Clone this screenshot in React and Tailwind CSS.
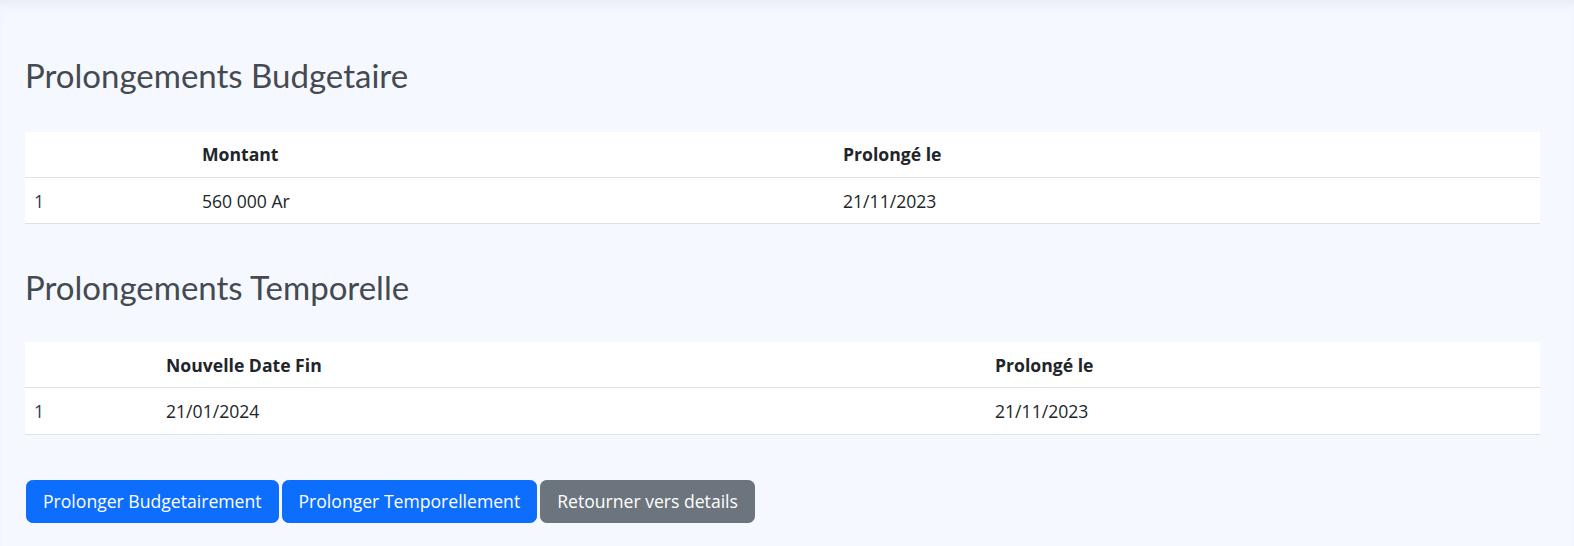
import React from 'react';

const prolongementsBudget = [
  { id: 1, montant: '560 000 Ar', date: '21/11/2023' },
];

const prolongementsTemps = [
  { id: 1, dateFin: '21/01/2024', date: '21/11/2023' },
];

function Titre({ children, className }) {
  return (
    <h2
      className={`text-[33px] leading-[1.2] text-[#444a50] ${className}`}
      style={{ fontFamily: 'Lato, "Noto Sans", sans-serif' }}
    >
      {children}
    </h2>
  );
}

const cell = 'px-[9px] py-[9.5px] text-left';
const btn = 'h-[43px] px-[16px] rounded-[6.6px] border text-white text-[17.6px]';

function App() {
  return (
    <div
      className="min-h-[546px] bg-[#f5f8fe] shadow-[inset_0_10px_14px_-8px_rgba(30,40,80,0.08)] pl-[25px] pr-[34px] pt-[56px] text-[#212529]"
      style={{ fontFamily: '"Open Sans", "Noto Sans", sans-serif' }}
    >
      {/* Budgetaire */}
      <Titre>Prolongements Budgetaire</Titre>
      <table className="w-full mt-[36px] bg-white text-[17.6px] leading-[26.4px] border-collapse">
        <thead>
          <tr className="border-b border-[#dee2e6]">
            <th className={`${cell} w-[168px] font-bold`}></th>
            <th className={`${cell} w-[641px] font-bold`}>Montant</th>
            <th className={`${cell} font-bold`}>Prolongé le</th>
          </tr>
        </thead>
        <tbody>
          {prolongementsBudget.map((p) => (
            <tr key={p.id} className="border-b border-[#dee2e6]">
              <td className={`${cell} text-[#2b3a55]`}>{p.id}</td>
              <td className={cell}>{p.montant}</td>
              <td className={cell}>{p.date}</td>
            </tr>
          ))}
        </tbody>
      </table>

      {/* Temporelle */}
      <Titre className="mt-[44px]">Prolongements Temporelle</Titre>
      <table className="w-full mt-[34px] bg-white text-[17.6px] leading-[26.4px] border-collapse">
        <thead>
          <tr className="border-b border-[#dee2e6]">
            <th className={`${cell} w-[132px] font-bold`}></th>
            <th className={`${cell} w-[829px] font-bold`}>Nouvelle Date Fin</th>
            <th className={`${cell} font-bold`}>Prolongé le</th>
          </tr>
        </thead>
        <tbody>
          {prolongementsTemps.map((p) => (
            <tr key={p.id} className="border-b border-[#dee2e6]">
              <td className={`${cell} text-[#2b3a55]`}>{p.id}</td>
              <td className={cell}>{p.dateFin}</td>
              <td className={cell}>{p.date}</td>
            </tr>
          ))}
        </tbody>
      </table>

      {/* Actions */}
      <div className="flex gap-[3px] mt-[45px] pl-px">
        <button className={`${btn} border-[#0d6efd] bg-[#0d6efd]`}>Prolonger Budgetairement</button>
        <button className={`${btn} border-[#0d6efd] bg-[#0d6efd]`}>Prolonger Temporellement</button>
        <button className={`${btn} border-[#6c757d] bg-[#6c757d]`}>Retourner vers details</button>
      </div>
    </div>
  );
}

export default App;
